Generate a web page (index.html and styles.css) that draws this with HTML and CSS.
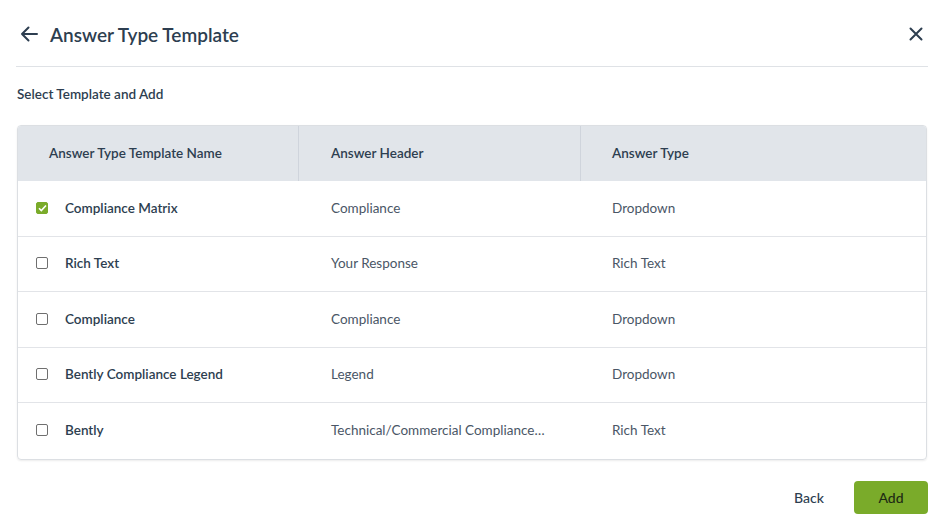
FILE: index.html
```html
<!DOCTYPE html>
<html>
<head>
<meta charset="utf-8">
<link rel="stylesheet" href="styles.css">
</head>
<body>
<div class="dialog">
  <div class="topbar">
    <div class="title-wrap">
      <svg class="back-icon" width="18" height="16" viewBox="0 0 18 16"><path d="M17 8H2M8.5 1.5L2 8l6.5 6.5" fill="none" stroke="#2d3e50" stroke-width="2" stroke-linecap="round" stroke-linejoin="round"/></svg>
      <h1 class="title">Answer Type Template</h1>
    </div>
    <svg class="close-icon" width="14" height="14" viewBox="0 0 14 14"><path d="M1.5 1.5l11 11M12.5 1.5l-11 11" stroke="#2d3e50" stroke-width="2" stroke-linecap="round"/></svg>
  </div>
  <div class="subtitle">Select Template and Add</div>
  <div class="table">
    <div class="row head">
      <div class="cell c1">Answer Type Template Name</div>
      <div class="cell c2">Answer Header</div>
      <div class="cell c3">Answer Type</div>
    </div>
    <div class="row">
      <div class="cell c1"><span class="cb checked"><svg width="9" height="8" viewBox="0 0 9 8"><path d="M1 4.2l2.3 2.3L8 1.5" fill="none" stroke="#fff" stroke-width="1.6"/></svg></span><span class="name">Compliance Matrix</span></div>
      <div class="cell c2">Compliance</div>
      <div class="cell c3">Dropdown</div>
    </div>
    <div class="row">
      <div class="cell c1"><span class="cb"></span><span class="name">Rich Text</span></div>
      <div class="cell c2">Your Response</div>
      <div class="cell c3">Rich Text</div>
    </div>
    <div class="row">
      <div class="cell c1"><span class="cb"></span><span class="name">Compliance</span></div>
      <div class="cell c2">Compliance</div>
      <div class="cell c3">Dropdown</div>
    </div>
    <div class="row">
      <div class="cell c1"><span class="cb"></span><span class="name">Bently Compliance Legend</span></div>
      <div class="cell c2">Legend</div>
      <div class="cell c3">Dropdown</div>
    </div>
    <div class="row last">
      <div class="cell c1"><span class="cb"></span><span class="name">Bently</span></div>
      <div class="cell c2"><span class="ellip">Technical/Commercial Compliance…</span></div>
      <div class="cell c3">Rich Text</div>
    </div>
  </div>
  <div class="footer">
    <button class="btn-back">Back</button>
    <button class="btn-add">Add</button>
  </div>
</div>
</body>
</html>
```

FILE: styles.css
```css
* { box-sizing: border-box; }
html, body { margin: 0; padding: 0; background: #fff; }
body {
  font-family: "Source Sans Pro", "Lato", "Noto Sans", sans-serif;
  color: #2d3e50;
}
.dialog {
  width: 942px;
  height: 528px;
  padding: 0 14px 0 16px;
}
.topbar {
  height: 67px;
  display: flex;
  align-items: center;
  justify-content: space-between;
  border-bottom: 1px solid #dfe2e6;
  padding: 0 5px 0 4px;
}
.title-wrap {
  display: flex;
  align-items: center;
}
.back-icon { margin-right: 12px; margin-top: 2px; }
.close-icon { margin-top: 2px; }
.title {
  margin: 0;
  font-size: 19px;
  font-weight: 600;
  color: #2d3e50;
  margin-top: 3px;
}
.subtitle {
  font-size: 13.5px;
  font-weight: 600;
  color: #2d3e50;
  padding: 19px 0 0 1px;
  height: 58px;
}
.table {
  margin-left: 1px;
  width: 910px;
  border: 1px solid #dcdfe3;
  border-radius: 4px;
  overflow: hidden;
  box-shadow: 0 1px 2px rgba(0,0,0,0.08);
}
.row {
  display: grid;
  grid-template-columns: 281px 282px 1fr;
  height: 55.5px;
  border-bottom: 1px solid #e2e4e8;
  font-size: 13.5px;
  color: #4a5666;
}
.row.last { border-bottom: none; }
.row.head {
  height: 55px;
  background: #e1e5ea;
  border-bottom: none;
  font-weight: 600;
  color: #2d3e50;
}
.cell {
  display: flex;
  align-items: center;
  padding-left: 31px;
  padding-bottom: 1px;
  white-space: nowrap;
  overflow: hidden;
}
.row .c2 { padding-left: 32px; }
.head .c1, .head .c2 { border-right: 1px solid #cfd4dc; }
.row:not(.head) .c1 { padding-left: 18px; }
.cb {
  width: 12px;
  height: 12px;
  border: 1.5px solid #6f6f6f;
  border-radius: 2px;
  margin-right: 17px;
  flex: none;
  display: flex;
  align-items: center;
  justify-content: center;
}
.cb.checked {
  background: #7aab2a;
  border-color: #7aab2a;
}
.name {
  font-weight: 600;
  color: #2d3e50;
}
.ellip {
  display: block;
}
.footer {
  display: flex;
  justify-content: flex-end;
  align-items: center;
  padding-top: 21px;
  padding-right: 0;
}
button {
  font-family: inherit;
  font-size: 14px;
  border: none;
  cursor: pointer;
}
.btn-back {
  background: none;
  color: #2d3e50;
  font-weight: 500;
  padding: 0;
  margin-right: 30px;
}
.btn-add {
  width: 74px;
  height: 33px;
  border-radius: 4px;
  background: #7aab2a;
  color: #1d2a14;
  font-weight: 500;
}
```
